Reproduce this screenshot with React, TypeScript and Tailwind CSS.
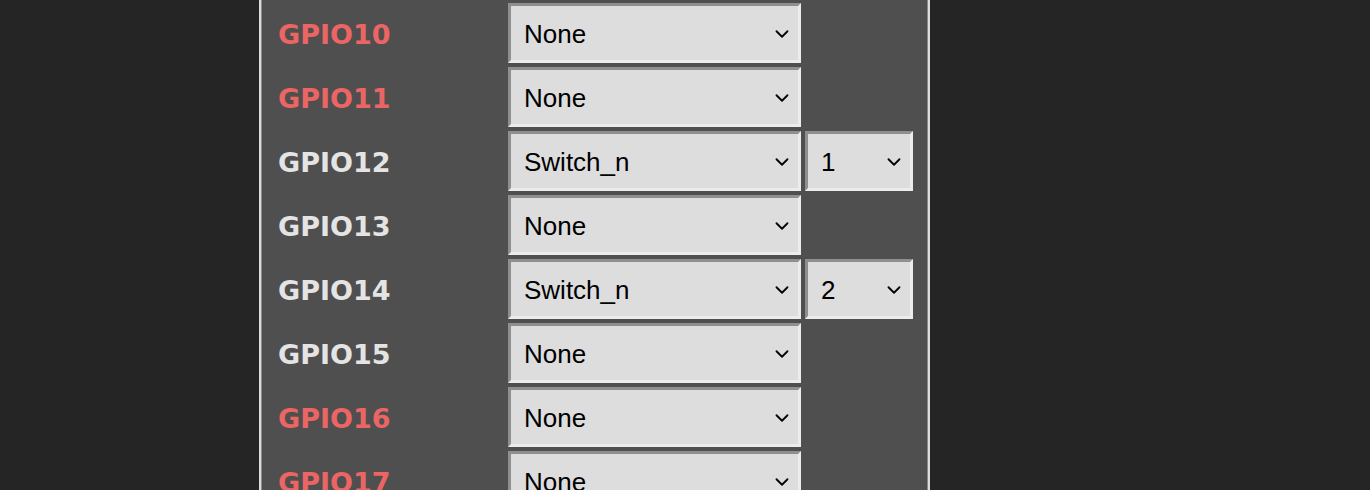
import { ChevronDown } from 'lucide-react';

type Pin = {
  name: string;
  reserved: boolean;
  func: string;
  index?: string;
};

const pins: Pin[] = [
  { name: 'GPIO10', reserved: true, func: 'None' },
  { name: 'GPIO11', reserved: true, func: 'None' },
  { name: 'GPIO12', reserved: false, func: 'Switch_n', index: '1' },
  { name: 'GPIO13', reserved: false, func: 'None' },
  { name: 'GPIO14', reserved: false, func: 'Switch_n', index: '2' },
  { name: 'GPIO15', reserved: false, func: 'None' },
  { name: 'GPIO16', reserved: true, func: 'None' },
  { name: 'GPIO17', reserved: true, func: 'None' },
];

function FakeSelect({ value, wide }: { value: string; wide?: boolean }) {
  return (
    <div
      className={`${wide ? 'w-[293px]' : 'w-[108px]'} h-[60px] shrink-0 flex items-center justify-between bg-[#dddddd] border-[3px] border-t-[#8f8f8f] border-l-[#8f8f8f] border-b-[#ececec] border-r-[#ececec] pl-[13px] pr-[5px] text-black`}
      style={{ fontFamily: '"Liberation Sans", Arial, sans-serif' }}
    >
      <span className="text-[26px] leading-none pt-[2px]">{value}</span>
      <ChevronDown size={22} strokeWidth={2} className="text-black mt-[1px]" />
    </div>
  );
}

export default function App() {
  return (
    <div className="w-[1370px] h-[490px] overflow-hidden bg-[#252525]">
      <div className="ml-[259px] w-[671px] h-[490px] bg-[#4f4f4f] border-x-2 border-[#dcdcdc] shadow-[inset_1px_0_0_#8a8a8a,inset_-1px_0_0_#8a8a8a]">
        <div className="flex flex-col gap-[4px] pt-[3px]">
          {pins.map((p) => (
            <div key={p.name} className="flex items-center">
              <div
                className={`w-[247px] shrink-0 pl-[17px] pt-[3px] text-[27px] font-bold leading-none ${
                  p.reserved ? 'text-[#ec6565]' : 'text-[#e4e4e4]'
                }`}
                style={{ fontFamily: '"DejaVu Sans", Verdana, sans-serif' }}
              >
                {p.name}
              </div>
              <div className="flex gap-[4px]">
                <FakeSelect value={p.func} wide />
                {p.index && <FakeSelect value={p.index} />}
              </div>
            </div>
          ))}
        </div>
      </div>
    </div>
  );
}
